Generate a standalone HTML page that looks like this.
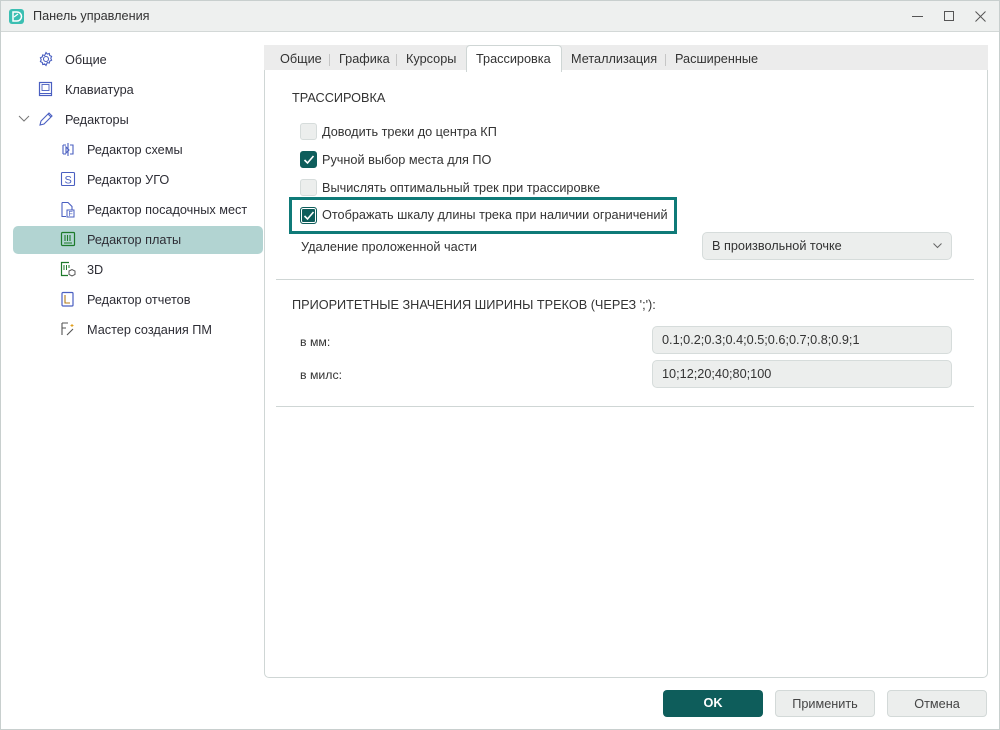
<!DOCTYPE html>
<html><head><meta charset="utf-8"><style>
*{box-sizing:border-box;margin:0;padding:0}
body{width:1000px;height:730px;background:#fff;font-family:"Liberation Sans","Noto Sans CJK SC",sans-serif;font-size:12.7px;color:#333;position:relative;overflow:hidden}
.win{position:absolute;left:0;top:0;width:1000px;height:730px;box-shadow:inset 0 0 0 1px #c8cfce;background:#fff}
.title{position:absolute;left:1px;top:1px;width:998px;height:31px;background:#eef0ef;border-bottom:1px solid #d3d8d7}
.t{position:absolute;white-space:nowrap}
.nav .t{font-size:12.7px;color:#2d2d35}
.sel{position:absolute;left:13px;top:226px;width:250px;height:28px;background:#b2d4d2;border-radius:5px}
.tabs{position:absolute;left:264px;top:45px;width:724px;height:26px;background:#ececec}
.tab{position:absolute;top:52px;font-size:12.7px;color:#333}
.sep{position:absolute;top:54px;width:1px;height:12px;background:#c6c6c6}
.panel{position:absolute;left:264px;top:70px;width:724px;height:608px;border:1px solid #cfd6d5;border-top:none;border-radius:0 0 5px 5px;background:#fff}
.acttab{position:absolute;left:466px;top:45px;width:96px;height:27px;background:#fff;border:1px solid #cfd6d5;border-bottom:none;border-radius:4px 4px 0 0}
.cb{position:absolute;left:300px;width:17px;height:17px;border:1px solid #d6dcdb;background:#eceeed;border-radius:3px}
.cb.on{background:#0e5d5b;border-color:#0e5d5b}
.cb.on svg{position:absolute;left:2px;top:2px}
.field{position:absolute;background:#eceeed;border:1px solid #d6dcdb;border-radius:5px;padding-left:9px;line-height:26px;font-size:12.7px;color:#333}
.hr{position:absolute;left:276px;width:698px;height:1px;background:#cfd6d5}
.btn{position:absolute;top:690px;width:100px;height:27px;border-radius:4px;text-align:center;line-height:26px;font-size:12.7px}
</style></head><body>
<div class="win">
<div class="title">
<svg style="position:absolute;left:8px;top:8px" width="15" height="15" viewBox="0 0 15 15"><rect x="0" y="0" width="15" height="15" rx="3" fill="#3bbfb2"/><path d="M4 3h4a4.5 4.5 0 0 1 0 9H4z" fill="none" stroke="#fff" stroke-width="1.5"/><path d="M5 8l4-3" stroke="#fff" stroke-width="1.2"/></svg>
<div class="t" style="left:32px;top:8px;font-size:12.7px;color:#333">Панель управления</div>
<div style="position:absolute;left:911px;top:15px;width:11px;height:1px;background:#555"></div>
<div style="position:absolute;left:943px;top:10px;width:10px;height:10px;border:1px solid #555"></div>
<svg style="position:absolute;left:974px;top:10px" width="11" height="11"><path d="M0.5 0.5L10.5 10.5M10.5 0.5L0.5 10.5" stroke="#555" stroke-width="1"/></svg>
</div>

<div class="nav">
<svg style="position:absolute;left:38px;top:51px" width="16" height="16" viewBox="0 0 16 16"><circle cx="8" cy="8" r="2.5" fill="none" stroke="#4a5fc1" stroke-width="1.1"/><path d="M8 1.5l1.3 1.6 2-.6.4 2 1.9.9-.8 1.9.8 1.9-1.9.9-.4 2-2-.6L8 14.5l-1.3-1.6-2 .6-.4-2-1.9-.9.8-1.9-.8-1.9 1.9-.9.4-2 2 .6z" fill="none" stroke="#4a5fc1" stroke-width="1.1"/></svg>
<div class="t" style="left:65px;top:53px">Общие</div>
<svg style="position:absolute;left:38px;top:81px" width="16" height="16"><rect x="1.5" y="1.5" width="12" height="13" fill="none" stroke="#4a5fc1" stroke-width="1.2"/><rect x="4" y="3.5" width="7" height="6" fill="none" stroke="#4a5fc1" stroke-width=".9"/><path d="M1.5 12.5h12" stroke="#4a5fc1"/></svg>
<div class="t" style="left:65px;top:83px">Клавиатура</div>
<svg style="position:absolute;left:18px;top:115px" width="12" height="8"><path d="M1 1l5 5 5-5" fill="none" stroke="#777" stroke-width="1"/></svg>
<svg style="position:absolute;left:38px;top:111px" width="16" height="16"><path d="M2 14l1-4 8-8 3 3-8 8z M10 3l3 3" fill="none" stroke="#4a5fc1" stroke-width="1.1"/></svg>
<div class="t" style="left:65px;top:113px">Редакторы</div>

<svg style="position:absolute;left:60px;top:141px" width="16" height="16"><path d="M3 4h3M3 4v9M3 13h3M10 4h3v9h-3M8 2v13M6 6v6l3-3z" fill="none" stroke="#4a5fc1" stroke-width="1.1"/></svg>
<div class="t" style="left:87px;top:143px">Редактор схемы</div>
<svg style="position:absolute;left:60px;top:171px" width="16" height="16"><rect x="1.5" y="1.5" width="13" height="13" rx="1" fill="none" stroke="#4a5fc1" stroke-width="1.1"/><text x="4.5" y="12.5" font-size="11" font-family="Liberation Sans" fill="#4a5fc1">S</text></svg>
<div class="t" style="left:87px;top:173px">Редактор УГО</div>
<svg style="position:absolute;left:60px;top:201px" width="16" height="17"><path d="M2 1.5h6l4 4V9M2 1.5v14h4" fill="none" stroke="#4a5fc1" stroke-width="1.1"/><rect x="7" y="9" width="7" height="7" fill="none" stroke="#4a5fc1"/><text x="8.5" y="15" font-size="7" font-family="Liberation Sans" fill="#4a5fc1">F</text></svg>
<div class="t" style="left:87px;top:203px">Редактор посадочных мест</div>
</div>
<div class="sel"></div>
<div class="nav">
<svg style="position:absolute;left:60px;top:231px" width="16" height="16"><rect x="1.5" y="1.5" width="13" height="13" rx="1" fill="none" stroke="#1d7a2a" stroke-width="1.2"/><path d="M5 4v6M7.5 4v6M10 4v6M4 12h8" stroke="#1d7a2a" stroke-width="1.1"/></svg>
<div class="t" style="left:87px;top:233px">Редактор платы</div>
<svg style="position:absolute;left:60px;top:261px" width="16" height="16"><path d="M9 1.5H1.5v13H8" fill="none" stroke="#1d7a2a" stroke-width="1.2"/><path d="M4 4v5M6.5 4v5M9 4v3" stroke="#1d7a2a"/><path d="M9 10l3-1.5 3 1.5v3.5l-3 1.5-3-1.5z" fill="none" stroke="#555"/></svg>
<div class="t" style="left:87px;top:263px">3D</div>
<svg style="position:absolute;left:60px;top:291px" width="16" height="16"><rect x="2" y="1.5" width="11" height="13.5" rx="1" fill="none" stroke="#4a5fc1" stroke-width="1.2"/><path d="M5 4v8h5" fill="none" stroke="#b07a1a" stroke-width="1.1"/></svg>
<div class="t" style="left:87px;top:293px">Редактор отчетов</div>
<svg style="position:absolute;left:60px;top:321px" width="16" height="16"><path d="M2 2h6M2 2v12M2 7h4M7 14l6-6" stroke="#555" stroke-width="1.1" fill="none"/><path d="M12 3v3M10.5 4.5h3" stroke="#e0a020"/></svg>
<div class="t" style="left:87px;top:323px">Мастер создания ПМ</div>
</div>

<div class="tabs"></div>
<div class="panel"></div>
<div class="acttab"></div>
<div class="tab" style="left:280px">Общие</div>
<div class="sep" style="left:329px"></div>
<div class="tab" style="left:339px">Графика</div>
<div class="sep" style="left:396px"></div>
<div class="tab" style="left:406px">Курсоры</div>
<div class="tab" style="left:476px">Трассировка</div>
<div class="tab" style="left:571px">Металлизация</div>
<div class="sep" style="left:665px"></div>
<div class="tab" style="left:675px">Расширенные</div>

<div class="t" style="left:292px;top:91px">ТРАССИРОВКА</div>
<div class="cb" style="top:123px"></div>
<div class="t" style="left:322px;top:125px">Доводить треки до центра КП</div>
<div class="cb on" style="top:151px"><svg width="12" height="12"><path d="M1.5 6l3 3 6-7" fill="none" stroke="#fff" stroke-width="1.6"/></svg></div>
<div class="t" style="left:322px;top:153px">Ручной выбор места для ПО</div>
<div class="cb" style="top:179px"></div>
<div class="t" style="left:322px;top:181px">Вычислять оптимальный трек при трассировке</div>
<div style="position:absolute;left:289px;top:197px;width:388px;height:37px;border:3px solid #0f7a78"></div>
<div class="cb on" style="top:207px;box-shadow:0 0 0 1px #fff inset"><svg width="12" height="12"><path d="M1.5 6l3 3 6-7" fill="none" stroke="#fff" stroke-width="1.6"/></svg></div>
<div class="t" style="left:322px;top:208px">Отображать шкалу длины трека при наличии ограничений</div>
<div class="t" style="left:301px;top:240px">Удаление проложенной части</div>
<div class="field" style="left:702px;top:232px;width:250px;height:28px">В произвольной точке</div>
<svg style="position:absolute;left:933px;top:243px" width="9" height="6"><path d="M0.5 0.5l4 4 4-4" fill="none" stroke="#666"/></svg>
<div class="hr" style="top:279px"></div>
<div class="t" style="left:292px;top:298px">ПРИОРИТЕТНЫЕ ЗНАЧЕНИЯ ШИРИНЫ ТРЕКОВ (ЧЕРЕЗ ';'):</div>
<div class="t" style="left:300px;top:335px;font-size:12.3px">в мм:</div>
<div class="field" style="left:652px;top:326px;width:300px;height:28px">0.1;0.2;0.3;0.4;0.5;0.6;0.7;0.8;0.9;1</div>
<div class="t" style="left:300px;top:368px;font-size:12.3px">в милс:</div>
<div class="field" style="left:652px;top:360px;width:300px;height:28px">10;12;20;40;80;100</div>
<div class="hr" style="top:406px"></div>

<div class="btn" style="left:663px;background:#0e5d5b;color:#fff;font-weight:bold">OK</div>
<div class="btn" style="left:775px;background:#eceeed;border:1px solid #d3d9d8;color:#444">Применить</div>
<div class="btn" style="left:887px;background:#eceeed;border:1px solid #d3d9d8;color:#444">Отмена</div>
</div>
</body></html>
